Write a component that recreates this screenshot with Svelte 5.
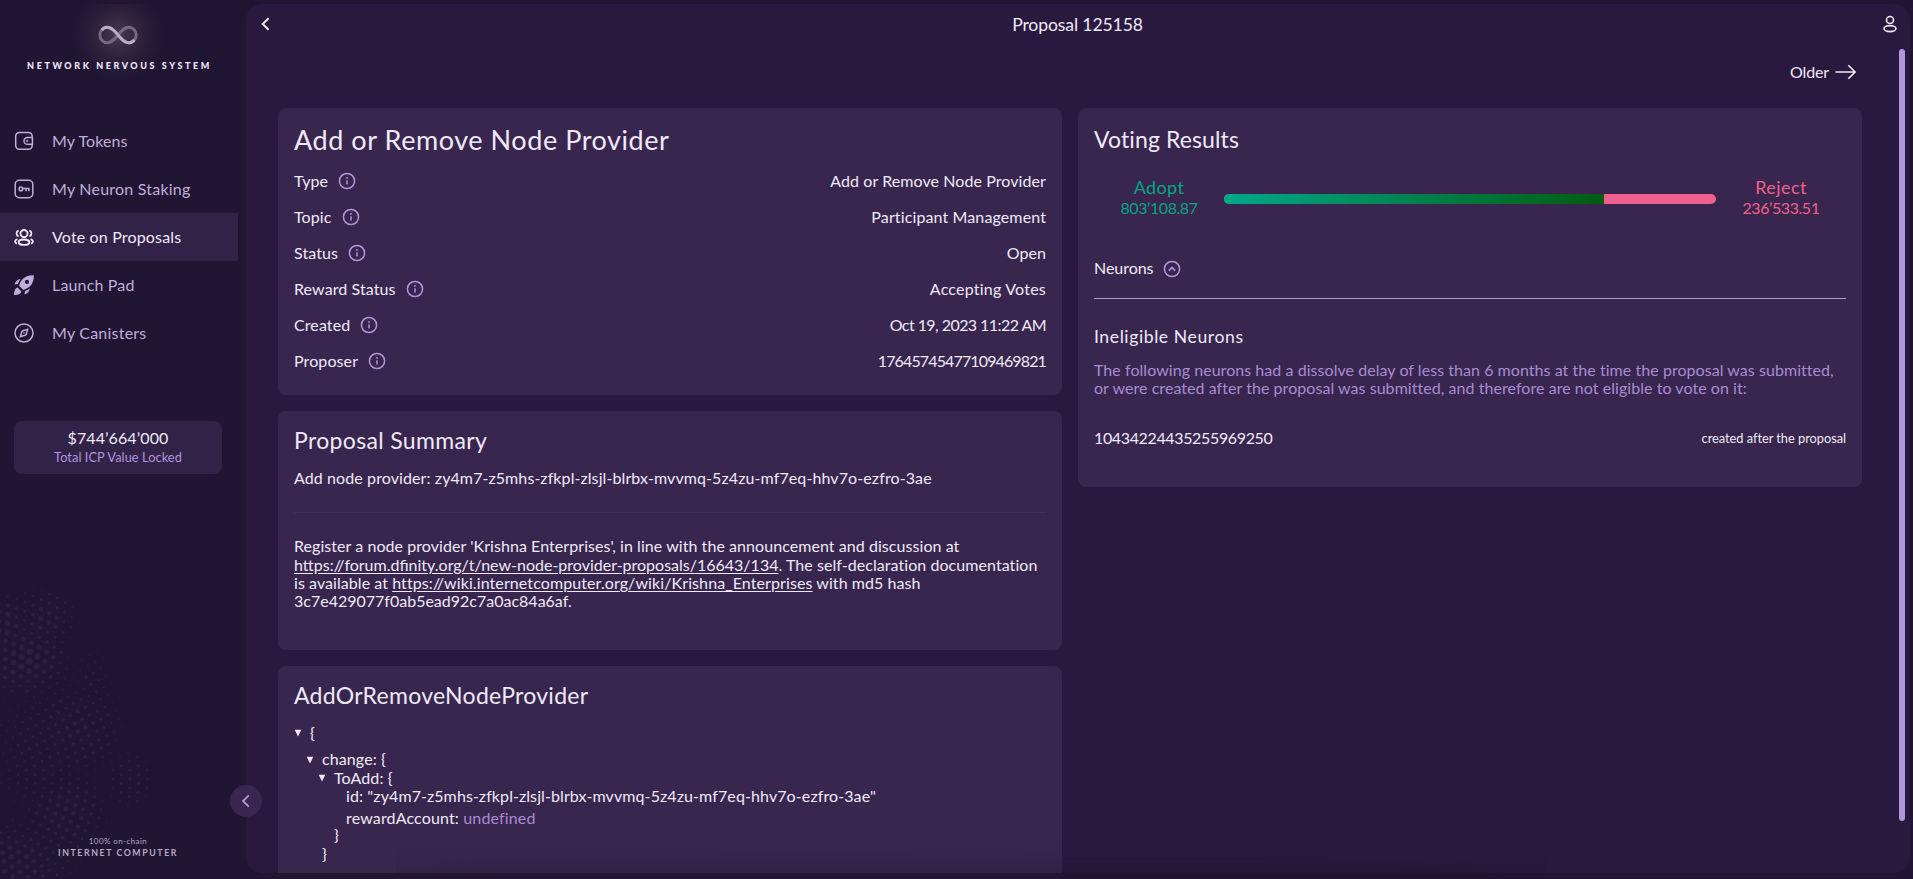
<script>
  const nav = [
    { label: 'My Tokens', icon: 'wallet', ls: 0.1 },
    { label: 'My Neuron Staking', icon: 'key', ls: 0.22 },
    { label: 'Vote on Proposals', icon: 'people', ls: 0.16, active: true },
    { label: 'Launch Pad', icon: 'rocket', ls: 0.16 },
    { label: 'My Canisters', icon: 'compass', ls: 0.22 }
  ];

  const details = [
    { label: 'Type', value: 'Add or Remove Node Provider' },
    { label: 'Topic', value: 'Participant Management', ls: 0.12 },
    { label: 'Status', value: 'Open' },
    { label: 'Reward Status', value: 'Accepting Votes', ls: 0.22 },
    { label: 'Created', value: 'Oct 19, 2023 11:22 AM', ls: -0.56 },
    { label: 'Proposer', value: '17645745477109469821', ls: -0.87 }
  ];

  const adopt = 803108.87;
  const reject = 236533.51;
  const adoptShare = (adopt / (adopt + reject)) * 100;

  // Halftone decoration: concentric rings of dots whose radius follows soft blobs.
  const blobs = [
    [26, 102, 3.4, 28, 24],
    [45, 62, 2.6, 22, 22],
    [4, 68, 3, 16, 22],
    [75, 172, 2.2, 34, 34],
    [92, 130, 1.4, 18, 36],
    [130, 222, 1.8, 20, 26],
    [66, 258, 2.5, 28, 32],
    [12, 305, 2.8, 42, 28],
    [40, 195, 1.5, 40, 60]
  ];
  const dots = [];
  for (let ring = 4; ring < 38; ring++) {
    const r = ring * 8.6;
    const n = Math.round((2 * Math.PI * r) / 8.8);
    for (let i = 0; i < n; i++) {
      const a = ((i + (ring % 2) / 2) / n) * 2 * Math.PI;
      const x = -42 + r * Math.cos(a);
      const y = 222 + r * Math.sin(a);
      if (x < -3 || x > 152 || y < 8 || y > 322) continue;
      let s = 0;
      for (const [bx, by, br, sx, sy] of blobs) {
        s = Math.max(s, br * Math.exp(-(((x - bx) / sx) ** 2 + ((y - by) / sy) ** 2) / 2));
      }
      if (s > 0.35) dots.push([x.toFixed(1), y.toFixed(1), s.toFixed(2)]);
    }
  }
</script>

{#snippet info()}
  <svg class="info" viewBox="0 0 20 20">
    <circle cx="10" cy="10" r="7.6" fill="none" stroke="currentColor" stroke-width="1.5" />
    <path d="M10 9.2v4.4" stroke="currentColor" stroke-width="1.5" />
    <circle cx="10" cy="6.9" r="0.9" fill="currentColor" />
  </svg>
{/snippet}

{#snippet arrow()}
  <svg class="arrow" viewBox="0 0 8 8"><path d="M0.7 0.8h6.6L4 7.6z" fill="currentColor" /></svg>
{/snippet}

{#snippet navIcon(name)}
  <svg class="nav-icon" viewBox="0 0 20 20" fill="none" stroke="currentColor" stroke-width="1.5">
    {#if name === 'wallet'}
      <path d="M18.2 6.6V5.2a3.7 3.7 0 0 0-3.7-3.7H5.4a3.7 3.7 0 0 0-3.7 3.7v9.4a3.7 3.7 0 0 0 3.7 3.7h9.1a3.7 3.7 0 0 0 3.7-3.7v-1.3" />
      <path d="M18.4 6.5h-5a3.4 3.4 0 0 0 0 6.8h5z" />
      <circle cx="13.2" cy="9.9" r="0.8" fill="currentColor" stroke-width="0.6" />
    {:else if name === 'key'}
      <rect x="1.2" y="1.2" width="17.6" height="17.6" rx="4.2" />
      <circle cx="6.9" cy="9.9" r="1.8" />
      <path d="M8.8 9.6h6.8M12 9.6v2.6M14.9 9.6v2.6" />
    {:else if name === 'people'}
      <circle cx="10" cy="6.6" r="3.6" stroke-width="1.9" />
      <ellipse cx="10" cy="15.2" rx="5.4" ry="2.7" stroke-width="1.9" />
      <path d="M4.6 3.6a3 3 0 0 0 0 5.7M15.4 3.6a3 3 0 0 1 0 5.7M3.4 12.1c-1.6.6-2.4 1.5-2.4 2.5 0 .9.7 1.7 2 2.1M16.6 12.1c1.6.6 2.4 1.5 2.4 2.5 0 .9-.7 1.7-2 2.1" stroke-width="1.8" />
    {:else if name === 'rocket'}
      <g fill="currentColor" stroke="none">
        <path fill-rule="evenodd" d="M19.8 0.2c-5.5-.1-9.8 1.6-12.4 5.4-1.2 1.8-1.9 3.6-2.3 5.1l4.2 4.2c1.5-.4 3.3-1.1 5.1-2.3C18.2 10 19.9 5.7 19.8.2zM13 9a2.1 2.1 0 1 1 0-4.2 2.1 2.1 0 0 1 0 4.2z" />
        <path d="M6.7 4.3C3.7 4.2 1.6 6.3.4 9.4l3.6-.4c.5-1.8 1.3-3.300 2.700-4.700zM15.700 13.300c.1 3-2 5.100-5.100 6.300l.4-3.600c1.800-.5 3.300-1.300 4.700-2.700z" />
        <path d="M3.600 12.600C1.300 13.100.3 15.400 0 20c4.600-.3 6.900-1.300 7.400-3.600z" />
      </g>
    {:else}
      <circle cx="10" cy="10" r="9" />
      <path d="M13.6 6.4l-1.3 4.700a1.800 1.800 0 0 1-1.200 1.200l-4.700 1.300 1.300-4.700a1.800 1.800 0 0 1 1.200-1.200z" />
      <circle cx="10" cy="10" r="0.8" fill="currentColor" stroke="none" />
    {/if}
  </svg>
{/snippet}

<div class="app">
  <aside>
    <svg class="dots" viewBox="0 0 160 322">
      {#each dots as [x, y, r]}<circle cx={x} cy={y} {r} />{/each}
    </svg>

    <div class="logo">
      <svg class="infinity" viewBox="0 0 40 20" fill="none" stroke-width="3">
        <path d="M20 10C16 5.2 13.5 2.3 9.500 2.300a7.700 7.700 0 0 0 0 15.400C13.500 17.700 16 14.800 20 10C24 5.200 26.500 2.300 30.500 2.300a7.700 7.700 0 0 1 0 15.400C26.500 17.700 24 14.800 20 10" stroke="#766885" />
        <path d="M3.800 5C6 2.200 9.500 1.800 12 2.800C15.500 4.200 17.500 7.200 20 10C22.500 12.800 24.500 15.800 28 17.200C30.500 18.200 34 17.800 36.200 15" stroke="#b9adc5" />
      </svg>
      <strong>NETWORK NERVOUS SYSTEM</strong>
    </div>

    <nav>
      {#each nav as item}
        <a class:active={item.active} href="#top">
          {@render navIcon(item.icon)}
          <span style="letter-spacing:{item.ls}px">{item.label}</span>
        </a>
      {/each}
    </nav>

    <div class="locked">
      <span class="amount">$744’664’000</span>
      <span class="caption">Total ICP Value Locked</span>
    </div>

    <footer>
      <span class="chain">100% on-chain</span>
      <span class="ic">INTERNET COMPUTER</span>
    </footer>

    <button class="toggle" aria-label="Collapse menu">
      <svg viewBox="0 0 12 16"><path d="M8.8 2.3L3 8l5.800 5.700" fill="none" stroke="currentColor" stroke-width="1.800" /></svg>
    </button>
  </aside>

  <main>
    <header>
      <svg class="back" viewBox="0 0 12 16"><path d="M8.600 2.300L2.700 8l5.900 5.700" fill="none" stroke="currentColor" stroke-width="1.900" /></svg>
      <h1>Proposal 125158</h1>
      <svg class="user" viewBox="0 0 16 18" fill="none" stroke="currentColor" stroke-width="1.600">
        <circle cx="8" cy="5" r="3.500" />
        <ellipse cx="8" cy="13.600" rx="6" ry="3" />
      </svg>
    </header>

    <div class="pager">
      <span>Older</span>
      <svg viewBox="0 0 22 16"><path d="M0.500 8h19.500M13.300 1.200L20.100 8l-6.800 6.800" fill="none" stroke="currentColor" stroke-width="1.600" /></svg>
    </div>

    <div class="columns">
      <div class="column">
        <section class="card overview">
          <h2 class="big">Add or Remove Node Provider</h2>
          {#each details as row}
            <div class="row">
              <span class="label">{row.label}{@render info()}</span>
              <span style="letter-spacing:{row.ls ?? 0.08}px">{row.value}</span>
            </div>
          {/each}
        </section>

        <section class="card summary">
          <h2>Proposal Summary</h2>
          <p>Add node provider: zy4m7-z5mhs-zfkpl-zlsjl-blrbx-mvvmq-5z4zu-mf7eq-hhv7o-ezfro-3ae</p>
          <hr />
          <p class="text">
            Register a node provider 'Krishna Enterprises', in line with the announcement and discussion at<br />
            <a class="plain" href="#forum">https://forum.dfinity.org/t/new-node-provider-proposals/16643/134</a>. The self-declaration documentation<br />
            is available at <a class="wiki" href="#wiki">https://wiki.internetcomputer.org/wiki/Krishna_Enterprises</a> with md5 hash<br />
            <span class="plain">3c7e429077f0ab5ead92c7a0ac84a6af.</span>
          </p>
        </section>

        <section class="card payload">
          <h2>AddOrRemoveNodeProvider</h2>
          <div class="tree">
            <div class="node first">{@render arrow()}{'{'}</div>
            <div class="node l1">{@render arrow()}change: {'{'}</div>
            <div class="node l2">{@render arrow()}ToAdd: {'{'}</div>
            <div class="leaf">id: "zy4m7-z5mhs-zfkpl-zlsjl-blrbx-mvvmq-5z4zu-mf7eq-hhv7o-ezfro-3ae"</div>
            <div class="leaf spaced">rewardAccount: <em>undefined</em></div>
            <div class="close2">{'}'}</div>
            <div class="close1">{'}'}</div>
          </div>
        </section>
      </div>

      <div class="column">
        <section class="card voting">
          <h2>Voting Results</h2>
          <div class="result">
            <div class="side adopt"><b>Adopt</b><span>803’108.87</span></div>
            <div class="bar"><div class="fill" style="width:{adoptShare}%"></div></div>
            <div class="side reject"><b>Reject</b><span>236’533.51</span></div>
          </div>
          <div class="neurons">
            <span>Neurons</span>
            <svg class="info" viewBox="0 0 20 20" fill="none" stroke="currentColor" stroke-width="1.500">
              <circle cx="10" cy="10" r="7.600" />
              <path d="M6.900 11.600L10 8.500l3.100 3.100" stroke-width="1.700" />
            </svg>
          </div>
          <h3>Ineligible Neurons</h3>
          <p class="muted">
            The following neurons had a dissolve delay of less than 6 months at the time the proposal was submitted,<br />
            or were created after the proposal was submitted, and therefore are not eligible to vote on it:
          </p>
          <div class="neuron">
            <span class="id">10434224435255969250</span>
            <small>created after the proposal</small>
          </div>
        </section>
      </div>
    </div>

    <div class="scrollbar"></div>
    <div class="shade"></div>
  </main>
</div>

<style>
  :global(body) { background: #201533; }
  * { box-sizing: border-box; }
  .app {
    display: flex;
    width: 100vw;
    height: 100vh;
    min-height: 879px;
    overflow: hidden;
    padding: 4px 3px 6px 0;
    background: #201533;
    color: #f0e9f8;
    font: 16px/18.4px Lato, "Liberation Sans", sans-serif;
    letter-spacing: 0.1px;
  }
  aside {
    position: relative;
    display: flex;
    flex-direction: column;
    flex: 0 0 246px;
  }
  .dots {
    position: absolute;
    left: 0;
    bottom: -6px;
    width: 160px;
    height: 322px;
    fill: #291f3e;
  }
  .logo {
    display: flex;
    flex-direction: column;
    align-items: center;
    width: 236px;
    height: 113px;
    padding-top: 21px;
    background: radial-gradient(circle at 118px 31px, #463950 0, #322640 18px, #251a37 34px, transparent 46px);
  }
  .infinity { width: 40px; height: 20px; }
  .logo strong {
    margin: 12px -3px 0 0;
    font-size: 9px;
    font-weight: 900;
    letter-spacing: 2.58px;
    white-space: nowrap;
  }
  nav { position: relative; width: 238px; }
  nav a {
    display: flex;
    align-items: center;
    gap: 18px;
    height: 48px;
    padding-left: 14px;
    color: #c0addb;
    text-decoration: none;
  }
  nav a.active { background: #312248; color: #f0e9f8; }
  .nav-icon { width: 20px; height: 20px; }
  .locked {
    display: flex;
    flex-direction: column;
    align-items: center;
    width: 208px;
    height: 53px;
    margin: 64px 0 0 14px;
    padding-top: 7px;
    border-radius: 8px;
    background: #312248;
  }
  .amount { line-height: 20px; letter-spacing: 0.1px; }
  .caption { font-size: 12.8px; color: #b394dc; letter-spacing: 0.06px; line-height: 19px; }
  footer {
    position: relative;
    display: flex;
    flex-direction: column;
    align-items: center;
    width: 236px;
    margin: auto 0 14px;
    color: #b5a9c4;
    font-size: 8px;
    line-height: 12px;
  }
  .chain { letter-spacing: 0.42px; }
  .ic { font-size: 8.8px; font-weight: 700; letter-spacing: 1.56px; }
  .toggle {
    position: absolute;
    right: -16px;
    bottom: 56px;
    z-index: 2;
    display: grid;
    place-items: center;
    width: 32px;
    height: 32px;
    padding: 0;
    border: 0;
    border-radius: 50%;
    background: #39274f;
    color: #b696df;
  }
  .toggle svg { width: 12px; height: 16px; }

  main {
    position: relative;
    display: flex;
    flex-direction: column;
    flex: 1;
    min-width: 0;
    overflow: hidden;
    border-radius: 16px;
    background: #29193f;
  }
  header {
    display: flex;
    align-items: center;
    justify-content: space-between;
    height: 40px;
    flex: none;
    padding: 0 12px 0 14px;
  }
  .back { width: 12px; height: 16px; }
  .user { width: 16px; height: 18px; }
  h1 {
    margin: 0;
    padding: 1px 0 0 1px;
    font-size: 17.6px;
    font-weight: 400;
    line-height: 22px;
    letter-spacing: -0.12px;
  }
  .pager {
    display: flex;
    align-items: center;
    justify-content: flex-end;
    gap: 6px;
    height: 56px;
    flex: none;
    padding: 0 53px 0 0;
    letter-spacing: -0.15px;
  }
  .pager svg { width: 22px; height: 16px; }
  .columns {
    display: grid;
    grid-template-columns: 784px 784px;
    gap: 16px;
    margin: 8px 0 0 32px;
    flex: 1;
    min-height: 0;
    align-items: start;
  }
  .column { display: flex; flex-direction: column; gap: 16px; }
  .card {
    padding: 16px;
    border-radius: 8px;
    background: #38264f;
    white-space: nowrap;
  }
  h2 {
    margin: 0;
    padding-top: 1px;
    font-size: 23px;
    font-weight: 400;
    line-height: 25px;
  }
  h2.big { font-size: 27px; line-height: 30px; letter-spacing: 0.56px; }
  p { margin: 0; }
  .overview { height: 287px; }
  .overview .big { margin-bottom: 8px; }
  .row {
    display: flex;
    align-items: center;
    justify-content: space-between;
    height: 36px;
  }
  .label { display: flex; align-items: center; gap: 9px; }
  .info { width: 20px; height: 20px; color: #b495dc; }
  .summary { height: 239px; }
  .summary h2 { margin-bottom: 16px; letter-spacing: 0.34px; }
  .summary hr {
    height: 1px;
    margin: 25px 0 24px;
    border: 0;
    background: #412f5b;
  }
  .text { line-height: 18.2px; letter-spacing: 0.06px; }
  .plain { letter-spacing: 0; }
  .wiki { letter-spacing: 0.1px; }
  .text a { color: inherit; text-underline-offset: 2px; }
  .payload { height: 260px; }
  .payload h2 { letter-spacing: 0.28px; }
  .tree { margin-top: 16px; letter-spacing: 0.1px; }
  .node { display: flex; align-items: center; gap: 8px; white-space: pre; }
  .arrow { width: 8px; height: 8px; }
  .first { margin-bottom: 8px; }
  .l1 { padding-left: 12px; }
  .l2 { padding-left: 24px; }
  .leaf { padding-left: 52px; }
  .spaced { margin-top: 3px; margin-bottom: -1px; letter-spacing: 0.15px; }
  .leaf em { font-style: normal; color: #a98bd2; }
  .close2 { padding-left: 40px; }
  .close1 { padding: 1px 0 0 28px; }

  .voting { height: 379px; }
  .voting h2 { line-height: 29px; letter-spacing: 0.12px; }
  .result {
    display: grid;
    grid-template-columns: 130px 1fr 130px;
    align-items: center;
    height: 50px;
    margin-top: 20px;
  }
  .side { display: flex; flex-direction: column; align-items: center; margin-top: -3px; }
  .side b { font-size: 18px; font-weight: 400; line-height: 21px; letter-spacing: 0.4px; }
  .side span { line-height: 20px; letter-spacing: -0.44px; }
  .adopt { color: #04a486; }
  .reject { color: #f0608c; }
  .bar {
    height: 10px;
    overflow: hidden;
    border-radius: 5px;
    background: #f0608c;
  }
  .fill { height: 100%; background: linear-gradient(90deg, #00a88a, #005c10); }
  .neurons {
    display: flex;
    align-items: center;
    gap: 9px;
    height: 60px;
    margin-top: 15px;
    border-bottom: 1px solid #b495dc;
    letter-spacing: -0.04px;
  }
  h3 {
    margin: 28px 0 14px;
    font-size: 17.6px;
    font-weight: 400;
    line-height: 20px;
    letter-spacing: 0.58px;
  }
  .muted { color: #a98bd2; line-height: 18px; letter-spacing: 0.05px; }
  .neuron {
    display: flex;
    align-items: center;
    justify-content: space-between;
    margin-top: 32px;
  }
  .id { letter-spacing: -0.36px; }
  small { font-size: 12.8px; letter-spacing: -0.02px; }

  .scrollbar {
    position: absolute;
    top: 45px;
    right: 5px;
    width: 6px;
    height: 772px;
    border-radius: 3px;
    background: #b197d9;
  }
  .shade {
    position: absolute;
    left: 150px;
    bottom: 0;
    width: 1150px;
    height: 26px;
    background: radial-gradient(ellipse at 50% 100%, rgba(25, 14, 35, 0.2) 55%, transparent 100%);
    mask-image: linear-gradient(transparent, black);
  }
</style>
